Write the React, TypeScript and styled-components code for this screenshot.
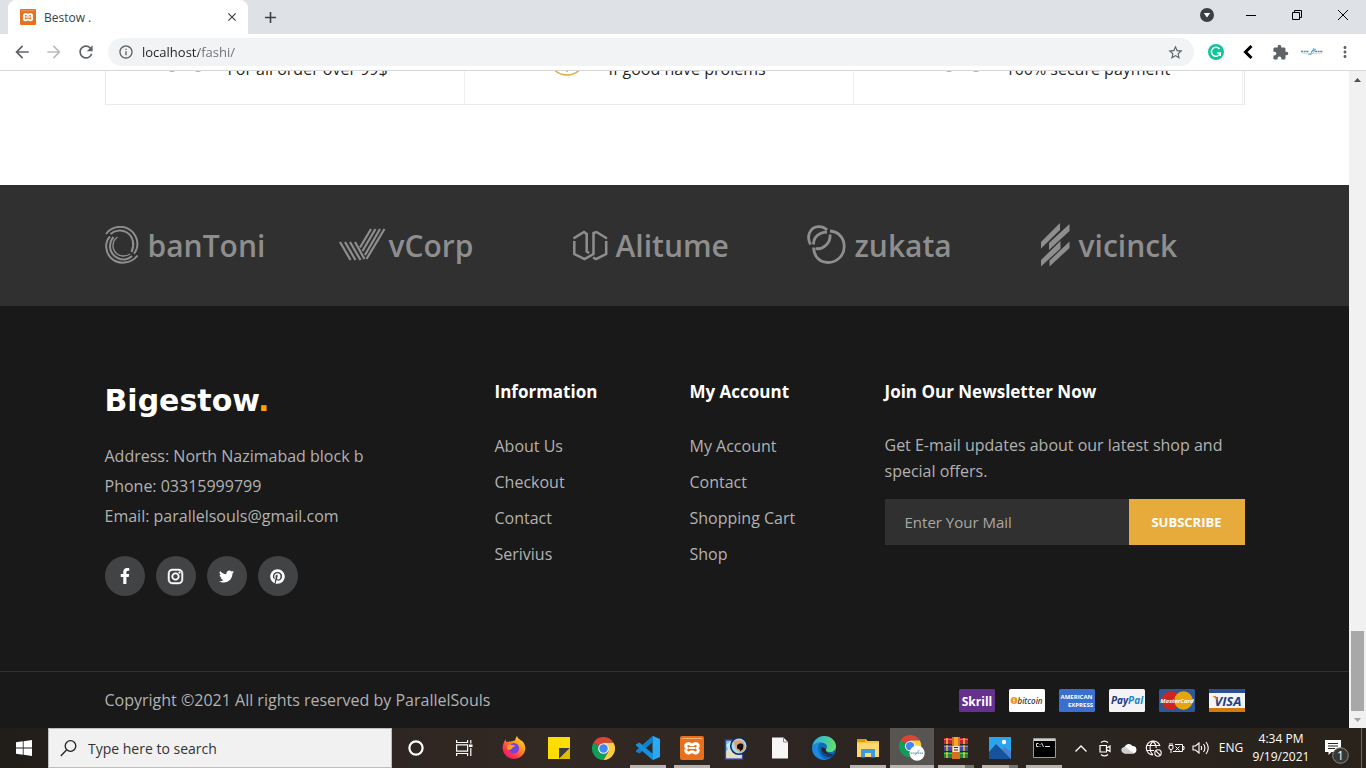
import React from "react";
import styled, { createGlobalStyle } from "styled-components";
import { FaFacebookF, FaInstagram, FaTwitter, FaPinterest } from "react-icons/fa";
import { MdExtension, MdStarBorder, MdArrowBack, MdArrowForward, MdRefresh, MdMoreVert, MdInfoOutline, MdClose, MdAdd } from "react-icons/md";

const siteFont = `"Open Sans", "Noto Sans", sans-serif`;
const systemFont = `"Open Sans", "Noto Sans", sans-serif`;

const GlobalStyle = createGlobalStyle`
  * { box-sizing: border-box; }
  body { margin: 0; font-family: ${siteFont}; background: #fff; }
  button, input { font: inherit; border: 0; padding: 0; margin: 0; background: none; color: inherit; outline: none; border-radius: 0; }
  ul { list-style: none; margin: 0; padding: 0; }
  h2, p { margin: 0; }
  a { color: inherit; text-decoration: none; }
  svg { display: block; flex: none; }
`;

const Screen = styled.div`
  display: flex;
  flex-direction: column;
  height: 100vh;
  overflow: hidden;
`;

/* ---------- browser frame ---------- */

const TabStrip = styled.div`
  display: flex;
  height: 34px;
  padding-left: 8px;
  background: #dee1e6;
  color: #3c4043;
  font-family: ${systemFont};
`;

const Tab = styled.div`
  display: flex;
  align-items: center;
  gap: 8px;
  width: 240px;
  padding: 0 8px 0 12px;
  border-radius: 8px 8px 0 0;
  background: #fff;
  font-size: 12px;
`;

const TabTitle = styled.span`
  flex: 1;
`;

const FrameButton = styled.button<{ $width: number }>`
  display: flex;
  align-items: center;
  justify-content: center;
  width: ${(p) => p.$width}px;
  flex: none;
  color: #5f6368;
`;

const CloseTab = styled(FrameButton)`
  color: #3c4043;
`;

const NewTab = styled(FrameButton)`
  margin-left: 8px;
  color: #3c4043;
`;

const WindowControls = styled.div`
  display: flex;
  margin-left: auto;
  height: 30px;
`;

const Toolbar = styled.div`
  display: flex;
  align-items: center;
  height: 37px;
  flex: none;
  padding: 0 4px 0 6px;
  background: #fff;
  border-bottom: 1px solid #d6d7d9;
  font-family: ${systemFont};
`;

const AddressBar = styled.div`
  display: flex;
  align-items: center;
  flex: 1;
  height: 28px;
  margin: 0 6px;
  padding: 0 10px;
  gap: 8px;
  border-radius: 14px;
  background: #f1f3f4;
  color: #5f6368;
`;

const AddressInput = styled.input`
  flex: 1;
  min-width: 0;
  font-size: 13px;
  background: linear-gradient(to right, #202124 57px, #6b6f74 57px);
  background-clip: text;
  -webkit-text-fill-color: transparent;
`;

/* ---------- page viewport ---------- */

const Viewport = styled.div`
  display: flex;
  flex: 1;
  min-height: 0;
`;

const Page = styled.div`
  display: flex;
  flex-direction: column;
  justify-content: flex-end;
  flex: 1;
  min-width: 0;
  overflow: hidden;
  background: #fff;
`;

const Scrollbar = styled.div`
  display: flex;
  flex-direction: column;
  width: 17px;
  padding: 0 2px 0 2px;
  background: #f1f1f1;
`;

const ScrollArrow = styled.div`
  display: flex;
  align-items: center;
  justify-content: center;
  height: 17px;
`;

const ScrollThumb = styled.div`
  height: 80px;
  margin-top: auto;
  background: #a8a8a8;
`;

const Container = styled.div`
  width: 100%;
  max-width: 1140px;
  margin: 0 auto;
`;

const BenefitSection = styled.section`
  padding-bottom: 80px;
`;

const Benefits = styled.ul`
  display: grid;
  grid-template-columns: 359fr 389fr 389fr;
  padding-right: 1px;
  border: 1px solid #ebebeb;
`;

const Benefit = styled.li<{ $inset: number }>`
  display: flex;
  align-items: flex-end;
  gap: 24px;
  height: 130px;
  padding: 0 0 23px ${(p) => p.$inset}px;
  border-right: 1px solid #f0f0f0;
  color: #252525;
  font-size: 16px;
  line-height: 24px;
`;

const LogoSection = styled.section`
  background: #303030;
`;

const LogoRow = styled.ul`
  display: grid;
  grid-template-columns: repeat(5, 1fr);
  column-gap: 30px;
  height: 121px;
`;

const PartnerLogo = styled.li<{ $gap: number }>`
  display: flex;
  align-items: center;
  gap: ${(p) => p.$gap}px;
  color: #8e8e8e;
  font-size: 30px;
  font-weight: 600;
`;

const Footer = styled.footer`
  background: #191919;
  color: #b2b2b2;
  font-size: 16px;
`;

const FooterGrid = styled.div`
  display: grid;
  grid-template-columns: 390fr 195fr 195fr 360fr;
  height: 365px;
  padding-top: 70px;
`;

const Brand = styled.a`
  display: block;
  margin: 4px 0 19px;
  color: #fff;
  font-family: "DejaVu Sans", sans-serif;
  font-size: 30px;
  font-weight: 700;
  line-height: 42px;
`;

const BrandDot = styled.span`
  color: orange;
`;

const ContactLine = styled.li`
  line-height: 30px;
`;

const Socials = styled.div`
  display: flex;
  gap: 11px;
  margin-top: 25px;
`;

const SocialLink = styled.a`
  display: flex;
  align-items: center;
  justify-content: center;
  width: 40px;
  height: 40px;
  border-radius: 50%;
  background: #424344;
  color: #fff;
`;

const Heading = styled.h2`
  margin-bottom: 24px;
  color: #fff;
  font-size: 17px;
  font-weight: 700;
  line-height: 32px;
`;

const FooterLink = styled.li`
  line-height: 36px;
  white-space: nowrap;
  &:first-child { margin-top: -4px; }
`;

const NewsText = styled.p`
  line-height: 26px;
`;

const Subscribe = styled.form`
  display: flex;
  height: 46px;
  margin-top: 15px;
`;

const MailInput = styled.input`
  flex: 1;
  min-width: 0;
  padding: 0 20px;
  background: #303030;
  color: #b2b2b2;
  font-size: 15px;
  &::placeholder { color: #a8a8a8; opacity: 1; }
`;

const SubscribeButton = styled.button`
  width: 116px;
  background: #e7ab3c;
  color: #fff;
  font-size: 13px;
  font-weight: 700;
`;

const CopyrightBar = styled.div`
  border-top: 1px solid #303030;
`;

const CopyrightRow = styled(Container)`
  display: flex;
  align-items: center;
  justify-content: space-between;
  height: 56px;
`;

const Cards = styled.div`
  display: flex;
  gap: 14px;
`;

/* ---------- taskbar ---------- */

const Taskbar = styled.div`
  display: flex;
  flex: none;
  height: 40px;
  background: linear-gradient(to right, #211d19, #332924 40%, #2c2521 60%, #29231c);
  color: #fff;
  font-family: ${systemFont};
`;

const TaskButton = styled.button<{ $width: number; $active?: boolean }>`
  position: relative;
  display: flex;
  align-items: center;
  justify-content: center;
  flex: none;
  width: ${(p) => p.$width}px;
  background: ${(p) => (p.$active ? "#575451" : "none")};
`;

const Running = styled.span<{ $full?: boolean; $grouped?: boolean }>`
  position: absolute;
  bottom: 0;
  left: ${(p) => (p.$full ? 0 : 4)}px;
  right: ${(p) => (p.$full ? 0 : 4)}px;
  height: 3px;
  background: ${(p) => (p.$grouped ? "linear-gradient(to right, #b7b2ae 75%, #77726e 75%)" : "#b7b2ae")};
`;

const SearchBox = styled.label`
  display: flex;
  align-items: center;
  gap: 11px;
  width: 344px;
  padding-left: 11px;
  border: 1px solid #bdbdbd;
  background: #f1f1f1;
`;

const SearchInput = styled.input`
  flex: 1;
  min-width: 0;
  color: #333;
  font-size: 14px;
  &::placeholder { color: #333; opacity: 1; }
`;

const Tray = styled.div`
  display: flex;
  align-items: center;
  margin-left: auto;
`;

const TrayButton = styled.button<{ $width: number }>`
  display: flex;
  align-items: center;
  justify-content: center;
  width: ${(p) => p.$width}px;
  height: 40px;
  font-size: 12px;
  line-height: 18px;
`;

const Notifications = styled(TrayButton)`
  padding-top: 6px;
`;

const DesktopEdge = styled.div`
  width: 5px;
  height: 40px;
  border-left: 1px solid #6a6663;
`;

/* ---------- drawings ---------- */

const Xampp = ({ size }: { size: number }) => (
  <svg width={size} height={size} viewBox="0 0 24 24">
    <rect width="24" height="24" rx="2" fill="#e8701c" />
    <path d="M2 2.500h20" stroke="#f6b07a" strokeWidth="1" />
    <path d="M8.500 7.500c1.600 0 2 1.300 3.500 1.300s1.900-1.300 3.500-1.300c2.800 0 3.600 2.800 1.800 4.500 1.800 1.700 1 5-1.800 5-1.600 0-2-1.300-3.500-1.300S10.100 17 8.500 17c-2.800 0-3.600-3.300-1.800-5-1.800-1.700-1-4.500 1.800-4.500z" fill="none" stroke="#fff" strokeWidth="3" strokeLinejoin="round" />
    <path d="M8.500 12h7" stroke="#fff" strokeWidth="2" />
  </svg>
);

const Grammarly = () => (
  <svg width="16" height="16" viewBox="0 0 16 16">
    <circle cx="8" cy="8" r="8" fill="#15c39a" />
    <path d="M11.500 5A4.500 4.500 0 1 0 12.300 9H9M12.300 9v3" fill="none" stroke="#fff" strokeWidth="1.400" />
  </svg>
);

const WingedMark = ({ width }: { width: number }) => (
  <svg width={width} height={width / 2} viewBox="0 0 24 12">
    <path d="M1 5.500h8M15 5.500h8" stroke="#5d87a0" strokeWidth="1.300" strokeDasharray="2 .6" />
    <path d="M8 8c4 1 6-1 7-5M10 9l4-7M11 6l5-3" stroke="#5aa7d6" strokeWidth="1" fill="none" />
    <path d="M2 7.500h20" stroke="#b9d4e4" strokeWidth=".6" />
  </svg>
);

const ChromeBall = () => (
  <>
    <path d="M12 12 1.600 6A12 12 0 0 1 22.400 6H12z" fill="#db4437" />
    <path d="M12 12l5.200 3L12 24A12 12 0 0 1 1.600 6z" fill="#0f9d58" />
    <path d="M12 6h10.400A12 12 0 0 1 12 24l5.200-9z" fill="#ffcd40" />
    <circle cx="12" cy="12" r="5.600" fill="#f1f1f1" />
    <circle cx="12" cy="12" r="4.400" fill="#4285f4" />
  </>
);

const Chrome = () => (
  <svg width="23" height="23" viewBox="0 0 24 24"><ChromeBall /></svg>
);

const ChromeProfile = () => (
  <svg width="26" height="26" viewBox="0 0 28 28">
    <ChromeBall />
    <circle cx="19.500" cy="19.500" r="8.200" fill="#fff" />
    <path d="M12.500 19.500h14" stroke="#6f9cb8" strokeWidth="1.500" strokeDasharray="1.500 .5" />
    <path d="M17 22l5-6" stroke="#5aa7d6" strokeWidth="1" />
  </svg>
);

const Firefox = () => (
  <svg width="24" height="24" viewBox="0 0 24 24">
    <defs>
      <linearGradient id="fox" x1="1" y1="0" x2="0.200" y2="1">
        <stop offset="0" stopColor="#fff04a" />
        <stop offset=".4" stopColor="#ff9a1f" />
        <stop offset=".75" stopColor="#ff3b47" />
        <stop offset="1" stopColor="#e3107c" />
      </linearGradient>
    </defs>
    <path d="M15 0c.3 2 2.500 3 4 4.600C21 5 23.400 9 23.400 13A11.500 11.500 0 0 1 .6 13C.5 9.500 1.600 6 3.500 3.500c.2 1.300.6 2 1.200 2.600C6 5.500 7.500 5.300 8.500 5.600 10 5 12 5 13 4.200 13.500 3 14 1 15 0z" fill="url(#fox)" />
    <circle cx="11.800" cy="12.300" r="5.300" fill="#7543d9" />
    <path d="M5 10c2-2 4-1.500 5.500-1 .8.300 2 .2 2.500.4-.3 1.600-2.500 1.500-3 2.600-.2 1.500-3 2.500-4.500 1z" fill="#ffa22c" />
  </svg>
);

const StickyNote = () => (
  <svg width="22" height="22" viewBox="0 0 22 22">
    <path d="M0 0h22v22H0z" fill="#fd0" />
    <path d="M11 11h11L11 22z" fill="#3b3b3b" />
    <path d="M22 11v11H11z" fill="#e0bb00" />
  </svg>
);

const VsCode = () => (
  <svg width="24" height="24" viewBox="0 0 24 24">
    <path d="M17 0l7 3v18l-7 3-.5-5V5z" fill="#29a9f2" />
    <path d="M17 0v6L3.500 17.500 0 15.700v-1.200L16 .5z" fill="#0e7fc9" />
    <path d="M17 24v-6L3.500 6.500 0 8.300v1.200l16 14z" fill="#1590de" />
  </svg>
);

const Painter = () => (
  <svg width="24" height="24" viewBox="0 0 24 24">
    <path d="M1.500 4h17v19h-17z" fill="#7cc8ea" stroke="#3b45b0" strokeWidth="1.400" />
    <path d="M2.200 15c4-3 8 1 15.600 0v7.300H2.200z" fill="#e8ddc5" />
    <path d="M2.200 9l5-4 2 7-4 4z" fill="#c9ecf8" />
    <circle cx="15" cy="10" r="8.300" fill="#a9dcf0" stroke="#152a56" strokeWidth="1.600" />
    <path d="M9.500 6c3-3 8-2.500 10.500.5l1.500 5c-1 3-3.500 5-6 5.300-1-2-4-2.500-4.300-5.800z" fill="#dca578" />
    <path d="M13 9.500c1.500-2.500 5-2.500 6.500-.5l-.5 4-3 2.500c.5-2-1-2.500-3-3z" fill="#14100f" />
  </svg>
);

const BlankFile = () => (
  <svg width="16" height="22" viewBox="0 0 16 22">
    <path d="M0 .5h11.500L16 5v16.500H0z" fill="#f6f6f6" />
    <path d="M11.500.5V5H16" fill="none" stroke="#8b8b8b" />
  </svg>
);

const Edge = () => (
  <svg width="24" height="24" viewBox="0 0 24 24">
    <defs>
      <linearGradient id="edgeTop" x1="0" y1=".4" x2="1" y2=".6">
        <stop offset="0" stopColor="#2bb1e6" />
        <stop offset="1" stopColor="#63e06a" />
      </linearGradient>
    </defs>
    <circle cx="12" cy="12" r="12" fill="#1068bd" />
    <path d="M.2 11C1.500 4 6.500 0 12 0c7 0 12 5 12 10 0 4-3 6-6 6-3.500 0-4.500-1.500-4-2.500 3-4-1-7-5-7-4 0-7.500 2-8.800 4.500z" fill="url(#edgeTop)" />
    <path d="M.2 11C2 7.500 6 6 9 6.500c-3 2-3.500 5.500-2.500 9 1.300 4.500 5 7.500 8.500 8C7 25-.5 19.500.2 11z" fill="#1b8bdc" />
    <path d="M9.500 11c-1 5 4 9.500 12.500 7.500-.5-.5-2-.3-4-.8-3-.7-5-2.700-4-4.700z" fill="#2a251f" />
    <path d="M9.300 12c-.5 5 4 8.500 12.700 6.500-.6.800-1.400 1.800-2.500 2.700C13 22 7.500 18 9.300 12z" fill="#0d3f88" />
  </svg>
);

const Folder = () => (
  <svg width="22" height="19" viewBox="0 0 22 19">
    <path d="M0 0h9l1.500 2H22v16H0z" fill="#f8c63b" />
    <path d="M0 0h9l-1 3H0z" fill="#e19c0e" />
    <path d="M0 4h22v14H0z" fill="#ffd970" />
    <path d="M4 18.500V10h14v8.500h-4V14H8v4.500z" fill="#3d9ade" />
  </svg>
);

const WinRar = () => (
  <svg width="24" height="22" viewBox="0 0 24 22">
    <path d="M0 1h24v6H0z" fill="#c2243b" />
    <path d="M0 8h24v6H0z" fill="#4546a5" />
    <path d="M0 15h24v6H0z" fill="#188a38" />
    <path d="M0 2.500h24M0 9.500h24M0 16.500h24" stroke="#fff" strokeOpacity=".35" />
    <path d="M3 1v6M3 8v6M3 15v6M20 1v6M20 8v6M20 15v6" stroke="#f0c435" strokeWidth="1.500" />
    <path d="M8 0h8v22H8z" fill="#d2711f" />
    <path d="M10 0h4v9h-4z" fill="#f7a823" />
    <path d="M8.500 9h7v6h-7z" fill="#f2e6d6" />
    <path d="M10 10.500h4M10 13h4" stroke="#3d2b20" />
  </svg>
);

const Photos = () => (
  <svg width="22" height="22" viewBox="0 0 22 22">
    <path d="M0 0h22v22H0z" fill="#2aa4ea" />
    <path d="M12 13l4-3 6 5v7H12z" fill="#4f7fd0" />
    <path d="M0 15l7-8 15 15H0z" fill="#17539c" />
    <circle cx="15" cy="5" r="2.200" fill="#fff" />
  </svg>
);

const Terminal = () => (
  <svg width="23" height="20" viewBox="0 0 23 20">
    <path d="M.5.5h22v19H.5z" fill="#000" stroke="#9b9b9b" />
    <path d="M1 2h21" stroke="#cfcfcf" strokeWidth="2" />
    <path d="M5.500 5.500H3.500v3h2M7 6v.8M7 8v.8M8.500 5l2 4M12 8.500h5" fill="none" stroke="#e2e2e2" />
  </svg>
);

const TaskView = () => (
  <svg width="17" height="16" viewBox="0 0 17 16" fill="none" stroke="#fff" strokeWidth="1.200">
    <path d="M.6 0v2.500h11V0M.6 16v-2.500h11V16M.6 4.800h11v6.400H.6zM14.800 0v3.500M14.800 8v8" />
    <path d="M13 4.500h3.500v2.500H13z" fill="#fff" stroke="none" />
  </svg>
);

const CardLogo = ({ kind }: { kind: string }) => {
  const face = { fontFamily: "Open Sans, sans-serif", fontWeight: 800, textAnchor: "middle" as const };
  const bg: Record<string, string> = { Skrill: "#66308f", bitcoin: "#fff", amex: "#3a6fd0", PayPal: "#f4f4f6", MasterCard: "#2d5797", VISA: "#f4f4f4" };
  return (
    <svg width="36" height="23" viewBox="0 0 36 23" role="img" aria-label={kind}>
      <rect width="36" height="23" rx="1.500" fill={bg[kind]} />
      {kind === "Skrill" && <text x="18" y="16.500" fontSize="12" fill="#fff" {...face} fontWeight={700}>Skrill</text>}
      {kind === "bitcoin" && (
        <>
          <circle cx="5" cy="11.500" r="3.400" fill="#f7931a" />
          <path d="M4 10h1.600M4 11.500h2M4 13h1.600" stroke="#fff" strokeWidth=".9" />
          <text x="21" y="14.500" fontSize="8" fill="#3c3c3c" fontStyle="italic" {...face} fontWeight={600}>bitcoin</text>
        </>
      )}
      {kind === "amex" && (
        <>
          <text x="17.500" y="10" fontSize="6" fill="#fff" {...face} fontWeight={700}>AMERICAN</text>
          <text x="21.500" y="18" fontSize="6" fill="#fff" {...face} fontWeight={700}>EXPRESS</text>
        </>
      )}
      {kind === "PayPal" && (
        <text x="18" y="15" fontSize="10" fontStyle="italic" {...face} fontWeight={700}>
          <tspan fill="#1f3a80">Pay</tspan><tspan fill="#1c86c9">Pal</tspan>
        </text>
      )}
      {kind === "MasterCard" && (
        <>
          <circle cx="12" cy="11.500" r="9.300" fill="#d0241f" />
          <circle cx="24.500" cy="11.500" r="9.300" fill="#e5a50c" />
          <text x="18" y="14" fontSize="6" fill="#fff" fontStyle="italic" {...face} fontWeight={700}>MasterCard</text>
        </>
      )}
      {kind === "VISA" && (
        <>
          <path d="M0 1.500Q0 0 1.500 0h33Q36 0 36 1.500V4H0z" fill="#2c4f94" />
          <path d="M0 19h36v2.500q0 1.500-1.500 1.500h-33Q0 23 0 21.500z" fill="#d57b0b" />
          <text x="19" y="16.500" fontSize="13" fill="#1f3f86" fontStyle="italic" {...face} fontWeight={700}>VISA</text>
          <path d="M3.500 7h3.500l1.500 4.500z" fill="#e08a1e" />
        </>
      )}
    </svg>
  );
};

const BanToniMark = () => (
  <svg width="34" height="40" viewBox="0 0 34 40" fill="none" stroke="#8e8e8e" strokeWidth="2">
    <path d="M1 8C6 1 15-.7 22 2.200c8 3.800 12 12 9.800 20-.8 2.500-1.600 4-2.800 5.500" />
    <path d="M5.500 8C10 4 17 3.500 22 6.500c6 4 8 12 4.500 19.500" />
    <path d="M5 10.500C-.5 16 0 26 6 32c7 7 20 6 26.500-2.500" />
    <path d="M8.500 11C3.500 17 4 25 9.500 30c5 4.500 13 4.500 17.500 0" />
    <path d="M12.500 11C7 15 6.500 23 11.500 27.500c3.500 3 9 3.500 13.500.5" strokeWidth="1.400" />
  </svg>
);

const VCorpMark = () => (
  <svg width="47" height="35" viewBox="0 0 47 35" fill="none" stroke="#8e8e8e" strokeWidth="2.200">
    <path d="M1 14l10.500 18M6 14l10.500 18M11 14l10.500 18M16 14l9.500 17" />
    <path d="M32 1L21 19.500M36.500 1L23.500 23M41 1L26 27M45.500 1L27.500 31" />
  </svg>
);

const AlitumeMark = () => (
  <svg width="35" height="31" viewBox="0 0 35 31" fill="none" stroke="#8e8e8e" strokeWidth="2.500">
    <path d="M.5 8.500L11 2l2.700 2V21.500l2.500 1.500" />
    <path d="M1.300 11v13L11.500 29 20.500 24V3L23.500 2 34 8.500" />
    <path d="M33.200 11v13L23 29l-3-1.500" />
  </svg>
);

const ZukataMark = () => (
  <svg width="39" height="41" viewBox="0 0 39 41" fill="none" stroke="#8e8e8e" strokeWidth="2.800">
    <path d="M3.500 19.500C-1 11 3 2.500 11 1.600c4-.2 7 1 9 3.400" />
    <path d="M6.500 19.500C6.500 12 12 7.500 20 7" />
    <path d="M8.500 23.500C16 25 24 18 23 9.500" />
    <path d="M6.500 22.500C7 32 13 37.500 21 37.500c9 0 16.200-7 16.200-16C37.200 13 31.500 6.500 23 6" />
  </svg>
);

const VicinckMark = () => (
  <svg width="29" height="46" viewBox="0 0 29 46" fill="#8e8e8e">
    <path d="M0 19L19 0v7L0 25.500zM8 20L28.500 1v7L8 27zM0 37l19.500-19v7.500L0 43.500zM8.500 37.500l20-19V25l-20 18.500z" />
  </svg>
);

const TruckIcon = () => (
  <svg width="50" height="44" viewBox="0 0 50 44" fill="none" stroke="#e7ab3c" strokeWidth="2">
    <path d="M2 2h28v27H2zM30 10h10l8 9v10H30z" />
    <circle cx="18" cy="29" r="5" />
    <circle cx="44" cy="29" r="5" />
  </svg>
);

const ClockIcon = () => (
  <svg width="36" height="48" viewBox="2 0 36 48" fill="none" stroke="#e7ab3c" strokeWidth="1.600">
    <circle cx="20" cy="24" r="18" />
    <path d="M20 10v13l8 5M20 37v2" />
  </svg>
);

const PaymentIcon = () => (
  <svg width="46" height="44" viewBox="0 0 46 44" fill="none" stroke="#e7ab3c" strokeWidth="2">
    <path d="M2 1h42v26H2zM2 9h42" />
    <circle cx="13" cy="29" r="5" />
    <circle cx="40" cy="29" r="5" />
  </svg>
);

const partners = [
  { name: "banToni", gap: 9, mark: <BanToniMark /> },
  { name: "vCorp", gap: 3, mark: <VCorpMark /> },
  { name: "Alitume", gap: 8, mark: <AlitumeMark /> },
  { name: "zukata", gap: 9, mark: <ZukataMark /> },
  { name: "vicinck", gap: 9, mark: <VicinckMark /> },
];

const benefits = [
  { text: "For all order over 99$", inset: 48, icon: <TruckIcon /> },
  { text: "If good have prolems", inset: 84, icon: <ClockIcon /> },
  { text: "100% secure payment", inset: 82, icon: <PaymentIcon /> },
];

const socials = [
  { name: "Facebook", icon: <FaFacebookF size={16} /> },
  { name: "Instagram", icon: <FaInstagram size={17} strokeWidth={16} stroke="#fff" /> },
  { name: "Twitter", icon: <FaTwitter size={15} /> },
  { name: "Pinterest", icon: <FaPinterest size={15} /> },
];

const linkColumns = [
  { title: "Information", links: ["About Us", "Checkout", "Contact", "Serivius"] },
  { title: "My Account", links: ["My Account", "Contact", "Shopping Cart", "Shop"] },
];

type Task = { name: string; width: number; icon: React.ReactNode; running?: boolean; active?: boolean; grouped?: boolean };

const tasks: Task[] = [
  { name: "Firefox", width: 45, icon: <Firefox /> },
  { name: "Sticky Notes", width: 45, icon: <StickyNote /> },
  { name: "Chrome", width: 45, icon: <Chrome /> },
  { name: "Visual Studio Code", width: 44, icon: <VsCode />, running: true },
  { name: "XAMPP", width: 44, icon: <Xampp size={24} />, running: true },
  { name: "Photo editor", width: 44, icon: <Painter /> },
  { name: "Document", width: 44, icon: <BlankFile /> },
  { name: "Edge", width: 44, icon: <Edge /> },
  { name: "File Explorer", width: 44, icon: <Folder />, running: true },
  { name: "Chrome window", width: 44, icon: <ChromeProfile />, running: true, active: true },
  { name: "WinRAR", width: 44, icon: <WinRar />, running: true, grouped: true },
  { name: "Photos", width: 44, icon: <Photos />, running: true, grouped: true },
  { name: "Command Prompt", width: 44, icon: <Terminal />, running: true },
];

const TaskSpacer = styled.div`
  width: 3px;
`;

function BrowserFrame() {
  return (
    <>
      <TabStrip>
        <Tab>
          <Xampp size={16} />
          <TabTitle>Bestow .</TabTitle>
          <CloseTab $width={16} aria-label="Close tab"><MdClose size={14} stroke="currentColor" /></CloseTab>
        </Tab>
        <NewTab $width={28} aria-label="New tab"><MdAdd size={19} /></NewTab>
        <WindowControls>
          <FrameButton $width={42} aria-label="Search tabs">
            <svg width="14" height="14" viewBox="0 0 14 14"><circle cx="7" cy="7" r="7" fill="#3c4043" /><path d="M3.800 5h6.400L7 9.500z" fill="#fff" /></svg>
          </FrameButton>
          <FrameButton $width={46} aria-label="Minimize">
            <svg width="10" height="10" viewBox="0 0 10 10"><path d="M0 5.500h10" stroke="#000" /></svg>
          </FrameButton>
          <FrameButton $width={46} aria-label="Restore">
            <svg width="10" height="10" viewBox="0 0 10 10" fill="none" stroke="#000"><path d="M.5 2.500h7v7h-7zM2.500 2.500v-2h7v7h-2" /></svg>
          </FrameButton>
          <FrameButton $width={46} aria-label="Close">
            <svg width="10" height="10" viewBox="0 0 10 10"><path d="M0 0l10 10M10 0L0 10" stroke="#000" /></svg>
          </FrameButton>
        </WindowControls>
      </TabStrip>
      <Toolbar>
        <FrameButton $width={32} aria-label="Back"><MdArrowBack size={20} /></FrameButton>
        <FrameButton $width={32} aria-label="Forward"><MdArrowForward size={20} color="#babcbe" /></FrameButton>
        <FrameButton $width={32} aria-label="Reload"><MdRefresh size={20} /></FrameButton>
        <AddressBar>
          <MdInfoOutline size={16} />
          <AddressInput aria-label="Address" defaultValue="localhost/fashi/" />
          <MdStarBorder size={17} />
        </AddressBar>
        <FrameButton $width={32} aria-label="Grammarly"><Grammarly /></FrameButton>
        <FrameButton $width={32} aria-label="Collapse">
          <svg width="10" height="14" viewBox="0 0 10 14"><path d="M8.500 1L2.500 7l6 6" stroke="#000" strokeWidth="3" fill="none" /></svg>
        </FrameButton>
        <FrameButton $width={32} aria-label="Extensions"><MdExtension size={17} /></FrameButton>
        <FrameButton $width={32} aria-label="Profile"><WingedMark width={24} /></FrameButton>
        <FrameButton $width={34} aria-label="Menu"><MdMoreVert size={18} /></FrameButton>
      </Toolbar>
    </>
  );
}

function SiteFooter() {
  return (
    <Footer>
      <Container>
        <FooterGrid>
          <div>
            <Brand href="#">Bigestow<BrandDot>.</BrandDot></Brand>
            <ul>
              <ContactLine>Address: North Nazimabad block b</ContactLine>
              <ContactLine>Phone: 03315999799</ContactLine>
              <ContactLine>Email: parallelsouls@gmail.com</ContactLine>
            </ul>
            <Socials>
              {socials.map((s) => (
                <SocialLink key={s.name} href="#" aria-label={s.name}>{s.icon}</SocialLink>
              ))}
            </Socials>
          </div>
          {linkColumns.map((c) => (
            <nav key={c.title}>
              <Heading>{c.title}</Heading>
              <ul>
                {c.links.map((l) => (
                  <FooterLink key={l}><a href="#">{l}</a></FooterLink>
                ))}
              </ul>
            </nav>
          ))}
          <div>
            <Heading>Join Our Newsletter Now</Heading>
            <NewsText>Get E-mail updates about our latest shop and special offers.</NewsText>
            <Subscribe onSubmit={(e) => e.preventDefault()}>
              <MailInput type="email" aria-label="Enter Your Mail" placeholder="Enter Your Mail" />
              <SubscribeButton>SUBSCRIBE</SubscribeButton>
            </Subscribe>
          </div>
        </FooterGrid>
      </Container>
      <CopyrightBar>
        <CopyrightRow>
          <p>Copyright ©2021 All rights reserved by ParallelSouls</p>
          <Cards>
            {["Skrill", "bitcoin", "amex", "PayPal", "MasterCard", "VISA"].map((k) => (
              <CardLogo key={k} kind={k} />
            ))}
          </Cards>
        </CopyrightRow>
      </CopyrightBar>
    </Footer>
  );
}

function SystemTray() {
  return (
    <Tray>
      <TrayButton $width={24} aria-label="Show hidden icons">
        <svg width="12" height="7" viewBox="0 0 12 7"><path d="M.5 6.500L6 1l5.500 5.500" fill="none" stroke="#fff" strokeWidth="1.300" /></svg>
      </TrayButton>
      <TrayButton $width={24} aria-label="Meet Now">
        <svg width="12" height="17" viewBox="0 0 12 17" fill="none" stroke="#fff" strokeWidth="1.200"><path d="M1 5.500h6.500v6.500H1zM7.500 8l3.500-2v5.500l-3.500-2M2 2.500C4 .8 7 .8 9 2.500M2 14.500c2 1.700 5 1.700 7 0" /></svg>
      </TrayButton>
      <TrayButton $width={24} aria-label="OneDrive">
        <svg width="16" height="11" viewBox="0 0 16 11"><path d="M4 10.500A3.500 3.500 0 0 1 3.500 4 4.500 4.500 0 0 1 11.500 3 3.800 3.800 0 0 1 12.500 10.500z" fill="#fff" /><path d="M1 5l3-1.500 9 7H4A3.500 3.500 0 0 1 1 5z" fill="#cfcfcf" /></svg>
      </TrayButton>
      <TrayButton $width={24} aria-label="Network">
        <svg width="17" height="17" viewBox="0 0 17 17" fill="none" stroke="#fff" strokeWidth="1.100"><path d="M15 6A7 7 0 1 0 8 15M1.500 5.500h13M1.500 10.500H9M8 1C4 5 4 11 8 15M8 1c2.500 2.500 3.300 4.500 3.300 7" /><circle cx="13" cy="13" r="3.200" /><path d="M10.800 10.800l4.400 4.400" /></svg>
      </TrayButton>
      <TrayButton $width={23} aria-label="Battery">
        <svg width="17" height="12" viewBox="0 0 17 12" fill="none" stroke="#fff"><path d="M7 2.500h7.500v7H5M14.500 4.500h1.500v3h-1.500M1 3.500h4v2.500Q5 7.500 3 7.500T1 6zM2 1v2.500M4 1v2.500M3 7.500V11M7.500 4.500l4 4M11.500 4.500l-4 4" /></svg>
      </TrayButton>
      <TrayButton $width={25} aria-label="Volume">
        <svg width="17" height="14" viewBox="0 0 17 14" fill="none" stroke="#fff" strokeWidth="1.100"><path d="M1 5h2.500L7 2v10L3.500 9H1zM9 5q1.300 2 0 4M11.500 3q2.800 4 0 8M14 1q4.500 6 0 12" /></svg>
      </TrayButton>
      <TrayButton $width={36}>ENG</TrayButton>
      <TrayButton $width={64}>4:34 PM<br />9/19/2021</TrayButton>
      <Notifications $width={48} aria-label="1 notification">
        <svg width="25" height="25" viewBox="0 0 25 25">
          <path d="M0 1h16v12H6.500l-3 3v-3H0z" fill="#fff" />
          <path d="M3 4.500h10M3 7h10M3 9.500h7" stroke="#2b251f" strokeWidth="1.200" />
          <circle cx="15.500" cy="16.500" r="7.800" fill="#3a3632" stroke="#8d8a86" />
          <text x="15.500" y="21" fontSize="12" fill="#fff" textAnchor="middle">1</text>
        </svg>
      </Notifications>
      <DesktopEdge />
    </Tray>
  );
}

export default function App() {
  return (
    <Screen>
      <GlobalStyle />
      <BrowserFrame />
      <Viewport>
        <Page>
          <BenefitSection>
            <Container>
              <Benefits>
                {benefits.map((b) => (
                  <Benefit key={b.text} $inset={b.inset}>{b.icon}{b.text}</Benefit>
                ))}
              </Benefits>
            </Container>
          </BenefitSection>
          <LogoSection>
            <Container>
              <LogoRow>
                {partners.map((p) => (
                  <PartnerLogo key={p.name} $gap={p.gap}>{p.mark}{p.name}</PartnerLogo>
                ))}
              </LogoRow>
            </Container>
          </LogoSection>
          <SiteFooter />
        </Page>
        <Scrollbar>
          <ScrollArrow><svg width="7" height="4" viewBox="0 0 7 4"><path d="M0 4l3.500-4L7 4z" fill="#505050" /></svg></ScrollArrow>
          <ScrollThumb />
          <ScrollArrow><svg width="7" height="4" viewBox="0 0 7 4"><path d="M0 0l3.500 4L7 0z" fill="#a3a3a3" /></svg></ScrollArrow>
        </Scrollbar>
      </Viewport>
      <Taskbar>
        <TaskButton $width={48} aria-label="Start">
          <svg width="16" height="16" viewBox="0 0 16 16" fill="#fff"><path d="M0 2.300l6.800-1v6.300H0zM7.600 1.200L16 0v7.600H7.600zM0 8.400h6.800v6.300l-6.800-1zM7.600 8.400H16V16l-8.400-1.200z" /></svg>
        </TaskButton>
        <SearchBox>
          <svg width="17" height="17" viewBox="0 0 17 17" fill="none" stroke="#222" strokeWidth="1.300"><circle cx="10.500" cy="6" r="5.300" /><path d="M6.500 10L.8 16" /></svg>
          <SearchInput aria-label="Search" placeholder="Type here to search" />
        </SearchBox>
        <TaskButton $width={48} aria-label="Cortana">
          <svg width="16" height="16" viewBox="0 0 16 16"><circle cx="8" cy="8" r="6.600" fill="none" stroke="#fff" strokeWidth="2.200" /></svg>
        </TaskButton>
        <TaskButton $width={48} aria-label="Task View"><TaskView /></TaskButton>
        <TaskSpacer />
        {tasks.map((t) => (
          <TaskButton key={t.name} $width={t.width} $active={t.active} aria-label={t.name}>
            {t.icon}
            {t.running && <Running $full={t.active} $grouped={t.grouped} />}
          </TaskButton>
        ))}
        <SystemTray />
      </Taskbar>
    </Screen>
  );
}
